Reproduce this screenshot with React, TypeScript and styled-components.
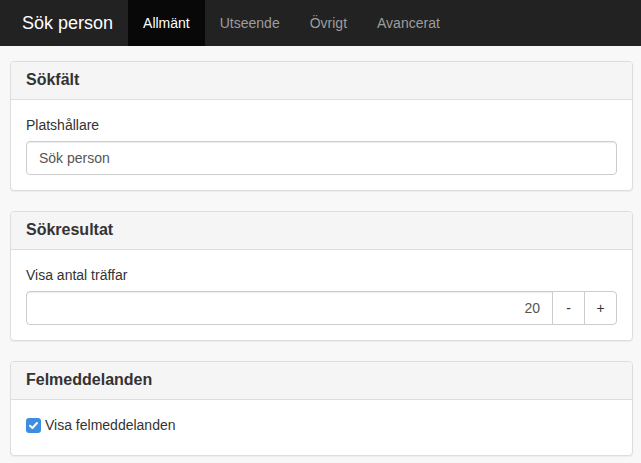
import React from 'react';
import styled, { createGlobalStyle } from 'styled-components';

const GlobalStyle = createGlobalStyle`
  html, body {
    margin: 0;
    padding: 0;
    background: #f8f8f8;
    font-family: "Liberation Sans", Arial, sans-serif;
    font-size: 14px;
    color: #333;
  }
`;

const Navbar = styled.nav`
  display: flex;
  align-items: stretch;
  height: 46px;
  background: #222;
`;

const Brand = styled.div`
  display: flex;
  align-items: center;
  padding: 0 15px 0 22px;
  font-size: 18px;
  color: #fff;
`;

const NavItem = styled.a<{ $active?: boolean }>`
  display: flex;
  align-items: center;
  padding: 0 15px;
  font-size: 14px;
  text-decoration: none;
  color: ${(p) => (p.$active ? '#fff' : '#9d9d9d')};
  background: ${(p) => (p.$active ? '#080808' : 'transparent')};
`;

const Content = styled.main`
  padding: 15px 8px 0 10px;
`;

const Panel = styled.section`
  background: #fff;
  border: 1px solid #ddd;
  border-radius: 4px;
  margin-bottom: 20px;
  box-shadow: 0 1px 1px rgba(0, 0, 0, 0.05);
  overflow: hidden;
`;

const PanelHeading = styled.div`
  background: #f5f5f5;
  border-bottom: 1px solid #ddd;
  padding: 9px 15px 10px;
  font-size: 16px;
  font-weight: bold;
  line-height: 18px;
`;

const PanelBody = styled.div`
  padding: 15px;
`;

const Label = styled.label`
  display: block;
  margin-bottom: 6px;
  line-height: 20px;
`;

const Input = styled.input<{ $right?: boolean }>`
  display: block;
  box-sizing: border-box;
  width: 100%;
  height: 34px;
  padding: 6px 12px;
  font: inherit;
  color: #555;
  border: 1px solid #ccc;
  border-radius: 4px;
  box-shadow: inset 0 1px 1px rgba(0, 0, 0, 0.075);
  text-align: ${(p) => (p.$right ? 'right' : 'left')};
  outline: none;
`;

const InputGroup = styled.div`
  display: flex;
  ${Input} {
    border-radius: 4px 0 0 4px;
    flex: 1;
  }
`;

const GroupButton = styled.button<{ $last?: boolean }>`
  width: 33px;
  height: 34px;
  margin-left: -1px;
  font: inherit;
  color: #333;
  background: #fff;
  border: 1px solid #ccc;
  border-radius: ${(p) => (p.$last ? '0 4px 4px 0' : '0')};
`;

const CheckRow = styled.label`
  display: flex;
  align-items: center;
  gap: 4px;
  line-height: 20px;
  padding-bottom: 5px;
`;

const CheckBox = styled.span`
  display: inline-flex;
  align-items: center;
  justify-content: center;
  width: 15px;
  height: 15px;
  border-radius: 3px;
  background: #3d8ee0;
`;

const App: React.FC = () => {
  return (
    <>
      <GlobalStyle />
      <Navbar>
        <Brand>Sök person</Brand>
        <NavItem $active>Allmänt</NavItem>
        <NavItem>Utseende</NavItem>
        <NavItem>Övrigt</NavItem>
        <NavItem>Avancerat</NavItem>
      </Navbar>
      <Content>
        <Panel>
          <PanelHeading>Sökfält</PanelHeading>
          <PanelBody>
            <Label>Platshållare</Label>
            <Input defaultValue="Sök person" />
          </PanelBody>
        </Panel>
        <Panel>
          <PanelHeading>Sökresultat</PanelHeading>
          <PanelBody>
            <Label>Visa antal träffar</Label>
            <InputGroup>
              <Input $right defaultValue="20" />
              <GroupButton>-</GroupButton>
              <GroupButton $last>+</GroupButton>
            </InputGroup>
          </PanelBody>
        </Panel>
        <Panel>
          <PanelHeading>Felmeddelanden</PanelHeading>
          <PanelBody>
            <CheckRow>
              <CheckBox>
                <svg width="11" height="11" viewBox="0 0 11 11">
                  <path d="M2 5.8 L4.4 8 L9 3" fill="none" stroke="#fff" strokeWidth="2" strokeLinecap="round" strokeLinejoin="round" />
                </svg>
              </CheckBox>
              Visa felmeddelanden
            </CheckRow>
          </PanelBody>
        </Panel>
      </Content>
    </>
  );
};

export default App;
